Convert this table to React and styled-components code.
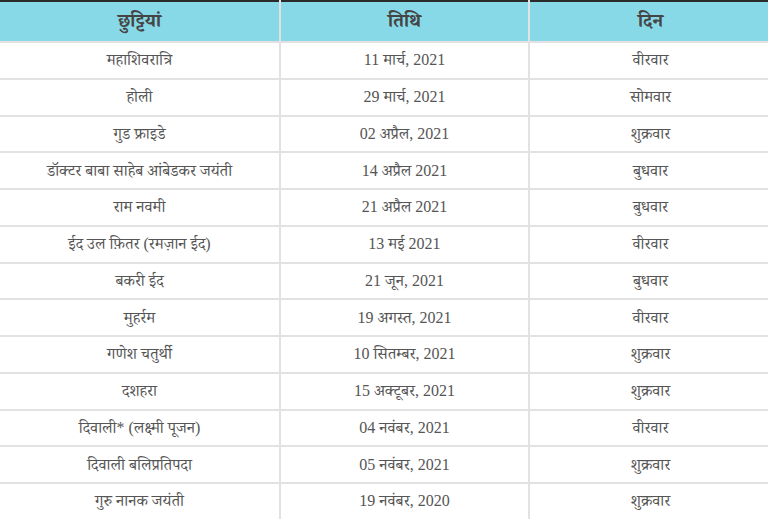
import React from "react";
import styled, { createGlobalStyle } from "styled-components";

const GlobalStyle = createGlobalStyle`
  html, body {
    margin: 0;
    padding: 0;
    background: #ffffff;
  }
  body {
    font-family: "Liberation Serif", "Noto Serif Devanagari", "Noto Sans Devanagari", "Noto Sans", serif;
  }
`;

const Table = styled.table`
  width: 767px;
  border-collapse: collapse;
  border-top: 2px solid #2b2b2b;
  table-layout: fixed;
`;

const HeadCell = styled.th`
  background: #87d9e7;
  color: #454545;
  font-size: 19px;
  font-weight: 700;
  height: 35px;
  padding: 4px 0 0;
  border-right: 2px solid #e2e2e2;
  border-bottom: 2px solid #e2e2e2;
  width: ${({ $w }) => $w}px;
`;

const Cell = styled.td`
  color: #555555;
  font-size: 16px;
  text-align: center;
  height: 29.75px;
  padding: 5px 0 0;
  border-right: 2px solid #e2e2e2;
  border-bottom: 2px solid #e2e2e2;
`;

const holidays = [
  ["महाशिवरात्रि", "11 मार्च, 2021", "वीरवार"],
  ["होली", "29 मार्च, 2021", "सोमवार"],
  ["गुड फ्राइडे", "02 अप्रैल, 2021", "शुक्रवार"],
  ["डॉक्टर बाबा साहेब आंबेडकर जयंती", "14 अप्रैल 2021", "बुधवार"],
  ["राम नवमी", "21 अप्रैल 2021", "बुधवार"],
  ["ईद उल फ़ितर (रमज़ान ईद)", "13 मई 2021", "वीरवार"],
  ["बकरी ईद", "21 जून, 2021", "बुधवार"],
  ["मुहर्रम", "19 अगस्त, 2021", "वीरवार"],
  ["गणेश चतुर्थी", "10 सितम्बर, 2021", "शुक्रवार"],
  ["दशहरा", "15 अक्टूबर, 2021", "शुक्रवार"],
  ["दिवाली* (लक्ष्मी पूजन)", "04 नवंबर, 2021", "वीरवार"],
  ["दिवाली बलिप्रतिपदा", "05 नवंबर, 2021", "शुक्रवार"],
  ["गुरु नानक जयंती", "19 नवंबर, 2020", "शुक्रवार"],
];

const App = () => (
  <>
    <GlobalStyle />
    <Table>
      <thead>
        <tr>
          <HeadCell $w={279}>छुट्टियां</HeadCell>
          <HeadCell $w={247}>तिथि</HeadCell>
          <HeadCell $w={241}>दिन</HeadCell>
        </tr>
      </thead>
      <tbody>
        {holidays.map(([name, date, day], i) => (
          <tr key={i}>
            <Cell>{name}</Cell>
            <Cell>{date}</Cell>
            <Cell>{day}</Cell>
          </tr>
        ))}
      </tbody>
    </Table>
  </>
);

export default App;
